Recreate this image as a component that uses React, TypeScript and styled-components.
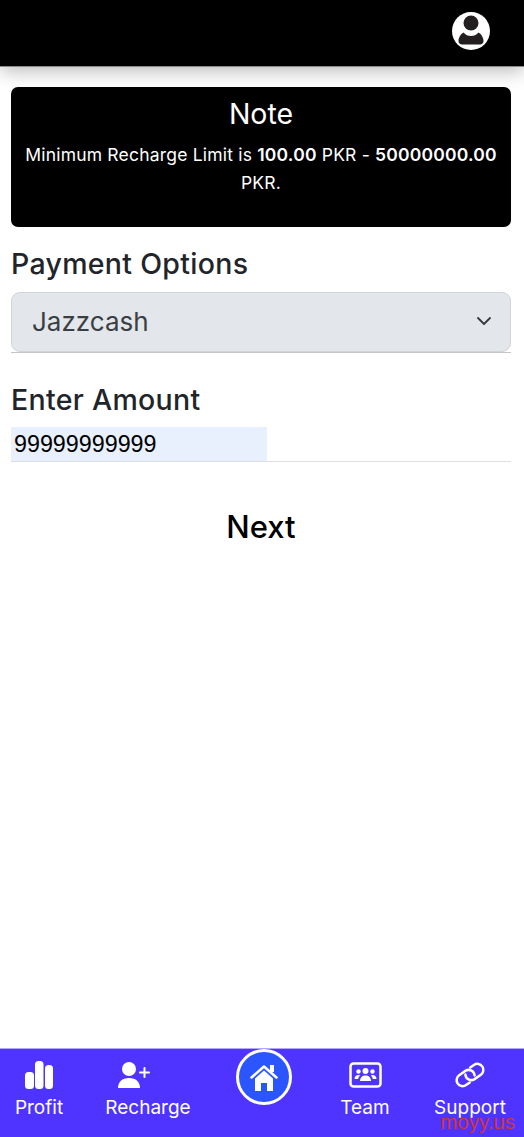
import React from 'react'
import styled, { createGlobalStyle } from 'styled-components'

const Global = createGlobalStyle`
  html, body {
    margin: 0;
    padding: 0;
    background: #fff;
    font-family: Inter, "Liberation Sans", sans-serif;
  }
`

const Page = styled.div`
  width: 524px;
  height: 1137px;
  display: flex;
  flex-direction: column;
  position: relative;
  overflow: hidden;
`

const Header = styled.header`
  height: 67px;
  flex: none;
  box-sizing: border-box;
  background: #000;
  border-bottom: 1px solid #8a8a8a;
  box-shadow: 0 4px 18px rgba(0, 0, 0, 0.28);
  display: flex;
  justify-content: flex-end;
  padding: 12px 34px 0 0;
`

const Avatar = styled.div`
  width: 38px;
  height: 38px;
  line-height: 0;
`

const Main = styled.main`
  flex: 1;
  padding: 20px 13px 0 11px;
  display: flex;
  flex-direction: column;
`

const NoteCard = styled.section`
  height: 140px;
  box-sizing: border-box;
  background: #000;
  border-radius: 7px;
  color: #fff;
  text-align: center;
  padding: 9px 8px 0;
`

const NoteTitle = styled.h2`
  margin: 0;
  font-size: 28.5px;
  line-height: 36px;
  font-weight: 400;
`

const NoteText = styled.p`
  margin: 9px 0 0;
  font-size: 17.5px;
  line-height: 28px;
  font-weight: 400;
  letter-spacing: 0.2px;
  b {
    font-weight: 600;
  }
`

const FieldLabel = styled.label<{ $top: number }>`
  display: block;
  color: #212529;
  font-size: 28.5px;
  line-height: 36px;
  font-weight: 500;
  letter-spacing: 0.3px;
  margin-top: ${(p) => p.$top}px;
`

const SelectBox = styled.div`
  margin-top: 10px;
  height: 60px;
  box-sizing: border-box;
  background: #e3e6ea;
  border: 1px solid #ced4da;
  border-radius: 9px;
  padding: 0 18px 2px 20px;
  display: flex;
  align-items: center;
  justify-content: space-between;
  color: #3a3f44;
  font-size: 26px;
`

const SelectRule = styled.div`
  height: 1px;
  background: #c4c4c4;
`

const AmountRow = styled.div`
  margin-top: 9px;
  border-bottom: 1px solid #dedede;
  height: 34px;
`

const AmountInput = styled.div`
  width: 256px;
  height: 34px;
  box-sizing: border-box;
  padding-left: 3px;
  background: #e8f0fe;
  color: #000;
  font-family: "Liberation Sans", Arial, sans-serif;
  font-size: 23.3px;
  line-height: 34px;
`

const NextButton = styled.div`
  margin-top: 43px;
  text-align: center;
  color: #000;
  font-size: 31px;
  line-height: 44px;
  font-weight: 500;
`

const BottomNav = styled.nav`
  height: 89px;
  flex: none;
  background: #4f33ff;
  border-top: 1px solid #b3a6ff;
  box-sizing: border-box;
  position: relative;
  display: grid;
  grid-template-columns: 78px 140px 92px 110px 100px;
`

const NavItem = styled.div`
  display: flex;
  flex-direction: column;
  align-items: center;
  color: #fff;
  padding-top: 8px;
  font-size: 19px;
  line-height: 28px;
  font-weight: 400;
`

const NavIcon = styled.div<{ $pull?: number }>`
  height: 36px;
  display: flex;
  align-items: center;
  justify-content: center;
  margin-bottom: 1px;
  margin-right: ${(p) => p.$pull ?? 0}px;
`

const HomeCell = styled.div`
  display: flex;
  justify-content: center;
`

const HomeBadge = styled.div`
  width: 56px;
  height: 56px;
  box-sizing: border-box;
  border-radius: 50%;
  border: 3px solid #fff;
  background: #2a55ff;
  display: flex;
  align-items: center;
  justify-content: center;
`

const Watermark = styled.span`
  position: absolute;
  right: 9px;
  bottom: 3px;
  color: #d5322f;
  font-family: "Liberation Sans", Arial, sans-serif;
  font-size: 20.5px;
  line-height: 24px;
`

const UserCircle = () => (
  <svg width="38" height="38" viewBox="0 0 38 38">
    <circle cx="19" cy="19" r="19" fill="#fff" />
    <circle cx="19" cy="11" r="7.500" fill="#231f20" />
    <path
      d="M11.500 20.500c2 2.500 4.500 3.500 7.500 3.500s5.500-1 7.500-3.500c3 1.500 5 5.500 5 8.500 0 2-1.500 3.500-3.500 3.500H10c-2 0-3.500-1.500-3.500-3.500 0-3 2-7 5-8.500z"
      fill="#231f20"
    />
  </svg>
)

const BarsIcon = () => (
  <svg width="28" height="28" viewBox="0 0 28 28" fill="#fff">
    <rect x="0" y="11" width="9" height="17" rx="3.500" />
    <rect x="10" y="0" width="8.500" height="28" rx="3.500" />
    <rect x="20" y="4" width="8" height="24" rx="3.500" />
  </svg>
)

const UserPlusIcon = () => (
  <svg width="32" height="26" viewBox="0 0 32 26" fill="#fff">
    <circle cx="11" cy="7" r="7" />
    <path d="M0 26c0-6 4-10 11-10s11 4 11 10z" />
    <path d="M26.500 6v9M22 10.500h9" stroke="#fff" strokeWidth="2" strokeLinecap="round" />
  </svg>
)

const TeamBoardIcon = () => (
  <svg width="33" height="26" viewBox="0 0 33 26" fill="#fff">
    <rect x="1.500" y="1.500" width="30" height="23" rx="3" fill="none" stroke="#fff" strokeWidth="2.500" />
    <circle cx="16.500" cy="9" r="3" />
    <circle cx="9.500" cy="9.500" r="2.200" />
    <circle cx="23.500" cy="9.500" r="2.200" />
    <path d="M11 19c0-3.500 2.400-5.500 5.500-5.500S22 15.500 22 19z" />
    <path d="M5.500 17c0-2.500 1.800-4 4-4 .8 0 1.300.2 1.800.5-1.200 1-1.900 2-2.100 3.500z" />
    <path d="M27.500 17c0-2.500-1.800-4-4-4-.8 0-1.300.2-1.800.5 1.200 1 1.900 2 2.100 3.500z" />
  </svg>
)

const ChainIcon = () => (
  <svg width="32" height="28" viewBox="-16 -14 32 28">
    <g transform="rotate(-35)" fill="none" stroke="#fff" strokeWidth="2.500" strokeLinecap="round">
      <path d="M-4.500 6H-9A6 6 0 0 1-9-6H-1A6 6 0 0 1 3.500 3" />
      <path d="M4.500-6H9A6 6 0 0 1 9 6H1A6 6 0 0 1-3.500-3" />
    </g>
  </svg>
)

const HouseIcon = () => (
  <svg width="28" height="27" viewBox="0 0 28 27" fill="#fff">
    <path d="M1.500 13.500L14 2.500l12.500 11" fill="none" stroke="#fff" strokeWidth="2.500" strokeLinecap="round" strokeLinejoin="round" />
    <rect x="20" y="1" width="4" height="7" />
    <path d="M5 14.500L14 6.500l9 8V27h-6v-8h-6v8H5z" />
  </svg>
)

const leftItems = [
  { label: 'Profit', icon: <BarsIcon />, pull: 0 },
  { label: 'Recharge', icon: <UserPlusIcon />, pull: 28 },
]

const rightItems = [
  { label: 'Team', icon: <TeamBoardIcon />, pull: 0 },
  { label: 'Support', icon: <ChainIcon />, pull: 0 },
]

const App = (): JSX.Element => {
  return (
    <Page>
      <Global />
      <Header>
        <Avatar>
          <UserCircle />
        </Avatar>
      </Header>
      <Main>
        <NoteCard>
          <NoteTitle>Note</NoteTitle>
          <NoteText>
            Minimum Recharge Limit is <b>100.00</b> PKR - <b>50000000.00</b> PKR.
          </NoteText>
        </NoteCard>
        <FieldLabel $top={19}>Payment Options</FieldLabel>
        <SelectBox>
          Jazzcash
          <svg width="16" height="16" viewBox="0 0 16 16">
            <path d="M2 5l6 6 6-6" fill="none" stroke="#343a40" strokeWidth="1.800" strokeLinecap="round" strokeLinejoin="round" />
          </svg>
        </SelectBox>
        <SelectRule />
        <FieldLabel $top={29}>Enter Amount</FieldLabel>
        <AmountRow>
          <AmountInput>99999999999</AmountInput>
        </AmountRow>
        <NextButton>Next</NextButton>
      </Main>
      <BottomNav>
        {leftItems.map((item) => (
          <NavItem key={item.label}>
            <NavIcon $pull={item.pull}>{item.icon}</NavIcon>
            {item.label}
          </NavItem>
        ))}
        <HomeCell>
          <HomeBadge>
            <HouseIcon />
          </HomeBadge>
        </HomeCell>
        {rightItems.map((item) => (
          <NavItem key={item.label}>
            <NavIcon $pull={item.pull}>{item.icon}</NavIcon>
            {item.label}
          </NavItem>
        ))}
        <Watermark>moyy.us</Watermark>
      </BottomNav>
    </Page>
  )
}

export default App
